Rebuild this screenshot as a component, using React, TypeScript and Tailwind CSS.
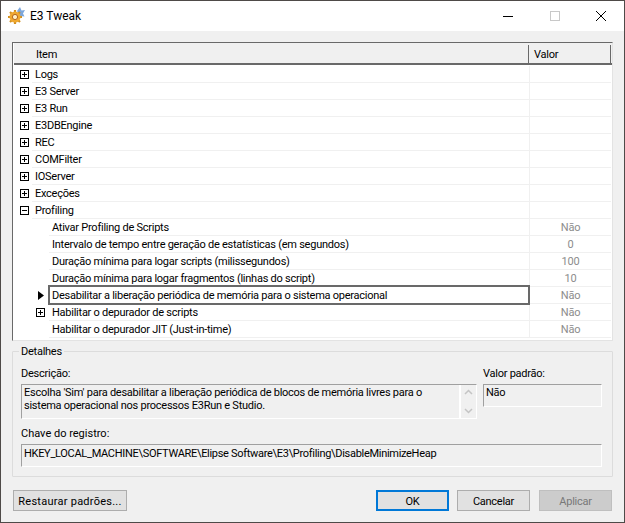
import React from "react";

const roots = ["Logs", "E3 Server", "E3 Run", "E3DBEngine", "REC", "COMFilter", "IOServer", "Exceções"];
const kids: { t: string; v: string; plus?: boolean; sel?: boolean }[] = [
  { t: "Ativar Profiling de Scripts", v: "Não" },
  { t: "Intervalo de tempo entre geração de estatísticas (em segundos)", v: "0" },
  { t: "Duração mínima para logar scripts (milissegundos)", v: "100" },
  { t: "Duração mínima para logar fragmentos (linhas do script)", v: "10" },
  { t: "Desabilitar a liberação periódica de memória para o sistema operacional", v: "Não", sel: true },
  { t: "Habilitar o depurador de scripts", v: "Não", plus: true },
  { t: "Habilitar o depurador JIT (Just-in-time)", v: "Não" },
];

function Box({ minus }: { minus?: boolean }) {
  return (
    <svg width="9" height="9" viewBox="0 0 9 9" className="block" shapeRendering="crispEdges">
      <rect x="0.5" y="0.5" width="8" height="8" fill="#fff" stroke="#000" />
      <path d={minus ? "M2 4.5H7" : "M2 4.5H7M4.5 2V7"} stroke="#000" />
    </svg>
  );
}

function RootRow({ t, minus }: { t: string; minus?: boolean }) {
  return (
    <div className="flex h-[17px] items-center">
      <div className="flex w-[18px] shrink-0 justify-center pl-[2px]"><Box minus={minus} /></div>
      <div className="flex h-full flex-1 items-center border-b border-[#f0f0f0] pl-[3px] pt-[2px]">{t}</div>
      <div className="h-full w-[82px] shrink-0 border-b border-l border-[#f0f0f0]" />
    </div>
  );
}

function KidRow({ t, v, plus, sel }: { t: string; v: string; plus?: boolean; sel?: boolean }) {
  return (
    <div className="flex h-[17px] items-center">
      <div className="flex w-[18px] shrink-0" />
      <div className="flex h-full w-[17px] shrink-0 items-center justify-center">
        {plus && <Box />}
        {sel && (
          <svg width="6" height="9" viewBox="0 0 6 9" className="block"><path d="M0 0L6 4.5L0 9Z" fill="#000" /></svg>
        )}
      </div>
      {sel ? (
        <div className="z-10 -mb-[1px] -ml-[1px] -mr-[1px] -mt-[2px] flex h-[20px] flex-1 items-center self-start border-2 border-[#696969] pl-[2px] pt-[2px]">{t}</div>
      ) : (
        <div className="flex h-full flex-1 items-center border-b border-[#f0f0f0] pl-[3px] pt-[2px]">{t}</div>
      )}
      <div className="flex h-full w-[82px] shrink-0 items-center justify-center border-b border-l border-[#f0f0f0] pt-[2px] text-[#8c8c8c]">{v}</div>
    </div>
  );
}

function Field({ className, children }: { className: string; children?: React.ReactNode }) {
  return (
    <div className={`border border-t-[#a0a0a0] border-l-[#a0a0a0] border-r-white border-b-white pl-[2px] pt-[1px] leading-[14px] ${className}`}>
      {children}
    </div>
  );
}

function Btn({ children, className }: { children: React.ReactNode; className: string }) {
  return <div className={`flex h-[21px] items-center justify-center pt-[3px] ${className}`}>{children}</div>;
}

export default function App() {
  return (
    <div
      className="flex h-[523px] w-[625px] flex-col overflow-hidden border border-[#4e4a48] bg-[#f0f0f0] text-[11px] tracking-[-0.25px] text-black"
      style={{ fontFamily: 'Roboto, "Liberation Sans", sans-serif' }}
    >
      <div className="flex h-[30px] shrink-0 items-center bg-white">
        <svg width="18" height="18" viewBox="0 0 18 18" className="ml-[7px] block">
          <path d="M12 0L13.5 3.5L17 3L15 6.5L16.5 9.5L12 9L9 4Z" fill="#7da7dc" />
          <g stroke="#d08f1f" strokeWidth="2.2">
            <path d="M7 3V17M0 10H14M2 5L12 15M12 5L2 15" />
          </g>
          <circle cx="7" cy="10" r="5.5" fill="#efa82f" />
          <circle cx="7" cy="10" r="2.6" fill="#fff0c4" stroke="#b5651d" />
        </svg>
        <span className="ml-[4px] text-[12px] tracking-[0px]">E3 Tweak</span>
        <div className="ml-auto flex items-center">
          <svg width="46" height="30" viewBox="0 0 46 30" className="block" shapeRendering="crispEdges"><path d="M18 15H28" stroke="#000" /></svg>
          <svg width="46" height="30" viewBox="0 0 46 30" className="ml-[1px] block" shapeRendering="crispEdges"><rect x="18.5" y="10.5" width="9" height="9" fill="none" stroke="#c8c8c8" /></svg>
          <svg width="46" height="30" viewBox="0 0 46 30" className="block"><path d="M18 10L28 20M28 10L18 20" stroke="#000" /></svg>
        </div>
      </div>

      <div className="flex flex-1 flex-col px-[11px] pt-[11px]">
        <div className="h-[299px] shrink-0 border border-t-[#696969] border-l-[#696969] border-r-[#e3e3e3] border-b-[#e3e3e3] bg-white pl-[1px]">
          <div className="flex h-[22px] border-y-2 border-t-[#f0f0f0] border-b-[#696969] bg-[#f0f0f0] pr-[1px]">
            <div className="flex flex-1 items-center pl-[22px] pt-[2px]">Item</div>
            <div className="flex w-[83px] shrink-0 items-center border-l border-r border-[#696969] pl-[5px] pt-[2px]">Valor</div>
          </div>
          <div className="pr-[1px] pt-[1px]">
            {roots.map((r) => <RootRow key={r} t={r} />)}
            <RootRow t="Profiling" minus />
            {kids.map((k) => <KidRow key={k.t} {...k} />)}
          </div>
        </div>

        <div className="relative mt-[10px] h-[126px] shrink-0 rounded-[1px] border border-[#dcdcdc] px-[8px]">
          <span className="absolute -top-[8px] left-[6px] bg-[#f0f0f0] px-[2px] leading-[15px]">Detalhes</span>
          <div className="mt-[14px] flex gap-[6px]">
            <div className="w-[456px]">
              <div className="h-[18px] leading-[16px]">Descrição:</div>
              <div className="flex h-[35px] border border-t-[#a0a0a0] border-l-[#a0a0a0] border-r-white border-b-white">
                <div className="flex-1 pl-[2px] pt-[1px] leading-[13px]">
                  Escolha 'Sim' para desabilitar a liberação periódica de blocos de memória livres para o<br />
                  sistema operacional nos processos E3Run e Studio.
                </div>
                <div className="flex w-[17px] shrink-0 flex-col items-center justify-between border-l-2 border-white py-[4px]">
                  <svg width="9" height="6" viewBox="0 0 9 6" className="block"><path d="M1 5L4.5 1.5L8 5" fill="none" stroke="#c4c4c4" strokeWidth="1.5" /></svg>
                  <svg width="9" height="6" viewBox="0 0 9 6" className="block"><path d="M1 1L4.5 4.5L8 1" fill="none" stroke="#c4c4c4" strokeWidth="1.5" /></svg>
                </div>
              </div>
            </div>
            <div className="w-[119px]">
              <div className="h-[18px] leading-[16px]">Valor padrão:</div>
              <Field className="h-[23px]">Não</Field>
            </div>
          </div>
          <div className="mt-[6px] h-[19px] pt-[1px] leading-[16px] tracking-[0px]">Chave do registro:</div>
          <Field className="h-[23px] w-[581px] pt-[2px] tracking-[-0.3px]">HKEY_LOCAL_MACHINE\SOFTWARE\Elipse Software\E3\Profiling\DisableMinimizeHeap</Field>
        </div>

        <div className="mt-[13px] flex">
          <Btn className="ml-[1px] w-[114px] border border-[#adadad] bg-[#e1e1e1] tracking-[0.25px]">Restaurar padrões...</Btn>
          <Btn className="ml-auto w-[73px] border-2 border-[#0078d7] bg-[#e1e1e1]">OK</Btn>
          <Btn className="ml-[8px] w-[73px] border border-[#adadad] bg-[#e1e1e1]">Cancelar</Btn>
          <Btn className="ml-[9px] mr-[1px] w-[73px] border border-[#bfbfbf] bg-[#cccccc] text-[#787878]">Aplicar</Btn>
        </div>
      </div>
    </div>
  );
}
